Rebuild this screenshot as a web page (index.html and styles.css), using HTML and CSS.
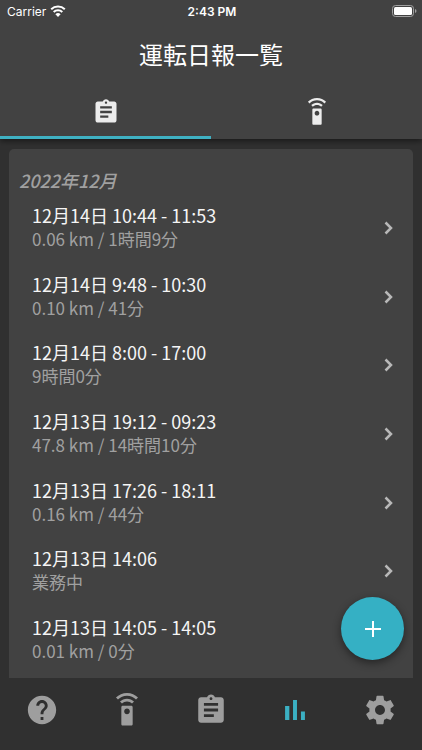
FILE: index.html
```html
<!DOCTYPE html>
<html lang="ja">
<head>
<meta charset="utf-8">
<meta name="viewport" content="width=device-width, initial-scale=1">
<title>運転日報一覧</title>
<link rel="stylesheet" href="styles.css">
</head>
<body>
<svg class="defs" aria-hidden="true">
  <symbol id="assignment" viewBox="0 0 24 24"><path d="M19 3h-4.180C14.400 1.840 13.300 1 12 1s-2.400.84-2.820 2H5c-1.100 0-2 .9-2 2v14c0 1.100.9 2 2 2h14c1.100 0 2-.9 2-2V5c0-1.100-.9-2-2-2zm-7 0c.55 0 1 .45 1 1s-.45 1-1 1-1-.45-1-1 .45-1 1-1zm2 14H7v-2h7v2zm3-4H7v-2h10v2zm0-4H7V7h10v2z"/></symbol>
  <symbol id="remote" viewBox="0 0 24 24"><path d="M15 9H9c-.55 0-1 .45-1 1v12c0 .55.45 1 1 1h6c.55 0 1-.45 1-1V10c0-.55-.45-1-1-1zm-3 6c-1.100 0-2-.9-2-2s.9-2 2-2 2 .9 2 2-.9 2-2 2zM7.050 6.050l1.410 1.410C9.370 6.560 10.620 6 12 6s2.630.56 3.540 1.460l1.410-1.410C15.680 4.780 13.930 4 12 4s-3.680.78-4.950 2.050zM12 0C8.960 0 6.210 1.230 4.220 3.220l1.410 1.410C7.260 3.010 9.510 2 12 2s4.740 1.010 6.360 2.640l1.410-1.410C17.790 1.230 15.040 0 12 0z"/></symbol>
  <symbol id="chevron" viewBox="0 0 24 24"><path d="M9.500 6.500L15 12l-5.500 5.500"/></symbol>
</svg>
<div class="app">
  <header class="header">
    <div class="status">
      <div class="carrier"><span>Carrier</span>
        <svg class="wifi" viewBox="0 0 16 12" aria-hidden="true"><path class="arc" d="M1.200 4.300a9.700 9.700 0 0 1 13.600 0M3.700 7a6.100 6.100 0 0 1 8.600 0"/><path d="M8 12l2.600-2.700a3.700 3.700 0 0 0-5.200 0z"/></svg>
      </div>
      <time class="clock">2:43 PM</time>
      <svg class="battery" viewBox="0 0 25 12" aria-hidden="true"><rect class="shell" x=".5" y=".5" width="21" height="11" rx="3"/><rect x="2" y="2" width="18" height="8" rx="1.500"/><path class="cap" d="M23 4q1.500.7 1.500 2T23 8z"/></svg>
    </div>
    <h1 class="title">運転日報一覧</h1>
    <div class="tabs" role="tablist">
      <button class="tab active" role="tab" aria-selected="true" aria-label="日報"><svg><use href="#assignment"/></svg></button>
      <button class="tab" role="tab" aria-selected="false" aria-label="リモコン"><svg><use href="#remote"/></svg></button>
    </div>
  </header>
  <main class="content">
    <section class="card">
      <h2 class="month">2022年12月</h2>
      <ul class="list">
        <li><a class="row" href="#"><span class="text"><span class="when">12月14日 10:44 - 11:53</span><span class="detail">0.06 km / 1時間9分</span></span><svg class="chevron"><use href="#chevron"/></svg></a></li>
        <li><a class="row" href="#"><span class="text"><span class="when">12月14日 9:48 - 10:30</span><span class="detail">0.10 km / 41分</span></span><svg class="chevron"><use href="#chevron"/></svg></a></li>
        <li><a class="row" href="#"><span class="text"><span class="when">12月14日 8:00 - 17:00</span><span class="detail">9時間0分</span></span><svg class="chevron"><use href="#chevron"/></svg></a></li>
        <li><a class="row" href="#"><span class="text"><span class="when">12月13日 19:12 - 09:23</span><span class="detail">47.8 km / 14時間10分</span></span><svg class="chevron"><use href="#chevron"/></svg></a></li>
        <li><a class="row" href="#"><span class="text"><span class="when">12月13日 17:26 - 18:11</span><span class="detail">0.16 km / 44分</span></span><svg class="chevron"><use href="#chevron"/></svg></a></li>
        <li><a class="row" href="#"><span class="text"><span class="when">12月13日 14:06</span><span class="detail">業務中</span></span><svg class="chevron"><use href="#chevron"/></svg></a></li>
        <li><a class="row" href="#"><span class="text"><span class="when">12月13日 14:05 - 14:05</span><span class="detail">0.01 km / 0分</span></span><svg class="chevron"><use href="#chevron"/></svg></a></li>
      </ul>
    </section>
    <button class="fab" aria-label="追加"><svg viewBox="0 0 16 16"><path d="M7 0h2v7h7v2H9v7H7V9H0V7h7z"/></svg></button>
  </main>
  <nav class="nav">
    <a href="#" aria-label="ヘルプ"><svg viewBox="0 0 24 24"><path d="M12 2C6.480 2 2 6.480 2 12s4.480 10 10 10 10-4.480 10-10S17.520 2 12 2zm1 17h-2v-2h2v2zm2.070-7.750l-.9.920C13.450 12.900 13 13.500 13 15h-2v-.5c0-1.100.45-2.100 1.170-2.830l1.240-1.260c.37-.36.59-.86.59-1.410 0-1.100-.9-2-2-2s-2 .9-2 2H8c0-2.210 1.790-4 4-4s4 1.790 4 4c0 .88-.36 1.680-.93 2.250z"/></svg></a>
    <a href="#" aria-label="リモコン"><svg><use href="#remote"/></svg></a>
    <a href="#" aria-label="日報"><svg><use href="#assignment"/></svg></a>
    <a href="#" class="current" aria-label="一覧" aria-current="page"><svg viewBox="0 0 24 24"><path d="M5 9.200h3V19H5zM10.600 5h2.800v14h-2.800zM16.200 13H19v6h-2.800z"/></svg></a>
    <a href="#" aria-label="設定"><svg viewBox="0 0 24 24"><path d="M19.430 12.980c.04-.32.07-.64.07-.98s-.03-.66-.07-.98l2.110-1.650c.19-.15.24-.42.12-.64l-2-3.460c-.12-.22-.39-.3-.61-.22l-2.490 1c-.52-.4-1.080-.73-1.690-.98l-.38-2.650C14.460 2.180 14.250 2 14 2h-4c-.25 0-.46.18-.49.42l-.38 2.650c-.61.25-1.170.59-1.690.98l-2.490-1c-.23-.09-.49 0-.61.22l-2 3.460c-.13.22-.07.49.12.64l2.110 1.650c-.04.32-.07.65-.07.98s.03.66.07.98l-2.110 1.650c-.19.15-.24.42-.12.64l2 3.460c.12.22.39.3.61.22l2.490-1c.52.4 1.080.73 1.690.98l.38 2.650c.03.24.24.42.49.42h4c.25 0 .46-.18.49-.42l.38-2.650c.61-.25 1.170-.59 1.690-.98l2.490 1c.23.09.49 0 .61-.22l2-3.460c.12-.22.07-.49-.12-.64l-2.110-1.650zM12 15.500c-1.930 0-3.500-1.570-3.500-3.500s1.570-3.500 3.500-3.500 3.500 1.570 3.500 3.500-1.570 3.500-3.500 3.500z"/></svg></a>
  </nav>
</div>
</body>
</html>
```
FILE: styles.css
```css
* { box-sizing: border-box; margin: 0; padding: 0; }
body {
  background: #303030;
  color: #fff;
  font-family: "Noto Sans CJK JP", sans-serif;
}
svg { display: block; fill: currentColor; }
a { color: inherit; text-decoration: none; }
button { border: 0; background: none; color: inherit; cursor: pointer; }
.defs { display: none; }
.app { display: flex; flex-direction: column; min-height: 100vh; }

.header {
  position: relative;
  background: #424242;
  box-shadow: 0 2px 6px rgba(0, 0, 0, .5);
}
.status {
  display: grid;
  grid-template-columns: 1fr auto 1fr;
  align-items: center;
  height: 22px;
  padding: 0 5px 0 7px;
  font-family: Inter, sans-serif;
  font-size: 12px;
}
.carrier { display: flex; align-items: center; gap: 4px; }
.wifi { width: 16px; height: 12px; }
.arc { fill: none; stroke: currentColor; stroke-width: 2; }
.clock { font-weight: 600; }
.battery { justify-self: end; width: 25px; height: 12px; }
.shell { fill: none; stroke: #a0a0a0; }
.cap { fill: #a0a0a0; }
.title {
  font-size: 24px;
  font-weight: 400;
  line-height: 64px;
  text-align: center;
}
.tabs { display: flex; height: 53px; }
.tab {
  flex: 1;
  display: flex;
  align-items: center;
  justify-content: center;
  padding-top: 2px;
  border-bottom: 3px solid transparent;
  color: #ececec;
}
.tab.active { border-color: #3fb1c3; }
.tab svg { width: 28px; height: 28px; }

.content {
  position: relative;
  flex: 1;
  display: flex;
  padding: 10px 9px 0;
}
.card {
  flex: 1;
  display: flex;
  flex-direction: column;
  padding: 17px 13px 4px 10px;
  background: #424242;
  border-radius: 5px 5px 0 0;
}
.month {
  color: #a0a0a0;
  font-size: 18px;
  font-style: italic;
  font-weight: 500;
  line-height: 28px;
}
.list {
  flex: 1;
  display: grid;
  grid-auto-rows: 1fr;
  list-style: none;
}
.row {
  display: flex;
  align-items: center;
  height: 100%;
  padding-left: 13px;
}
.text { flex: 1; display: flex; flex-direction: column; padding-bottom: 2px; }
.when { color: #f5f5f5; font-size: 18px; line-height: 24px; }
.detail { color: #a0a0a0; font-size: 17px; line-height: 24px; }
.chevron {
  width: 24px;
  height: 24px;
  fill: none;
  stroke: #b8b8b8;
  stroke-width: 2.5;
}
.fab {
  position: absolute;
  right: 18px;
  bottom: 18px;
  display: flex;
  align-items: center;
  justify-content: center;
  width: 63px;
  height: 63px;
  border-radius: 50%;
  background: #35b0c4;
  box-shadow: 0 3px 8px rgba(0, 0, 0, .45);
}
.fab svg { width: 16px; height: 16px; }

.nav { display: flex; height: 72px; padding-bottom: 8px; }
.nav a {
  flex: 1;
  display: flex;
  align-items: center;
  justify-content: center;
  color: #9e9e9e;
}
.nav .current { color: #3bb0c3; }
.nav svg { width: 34px; height: 34px; }
```
